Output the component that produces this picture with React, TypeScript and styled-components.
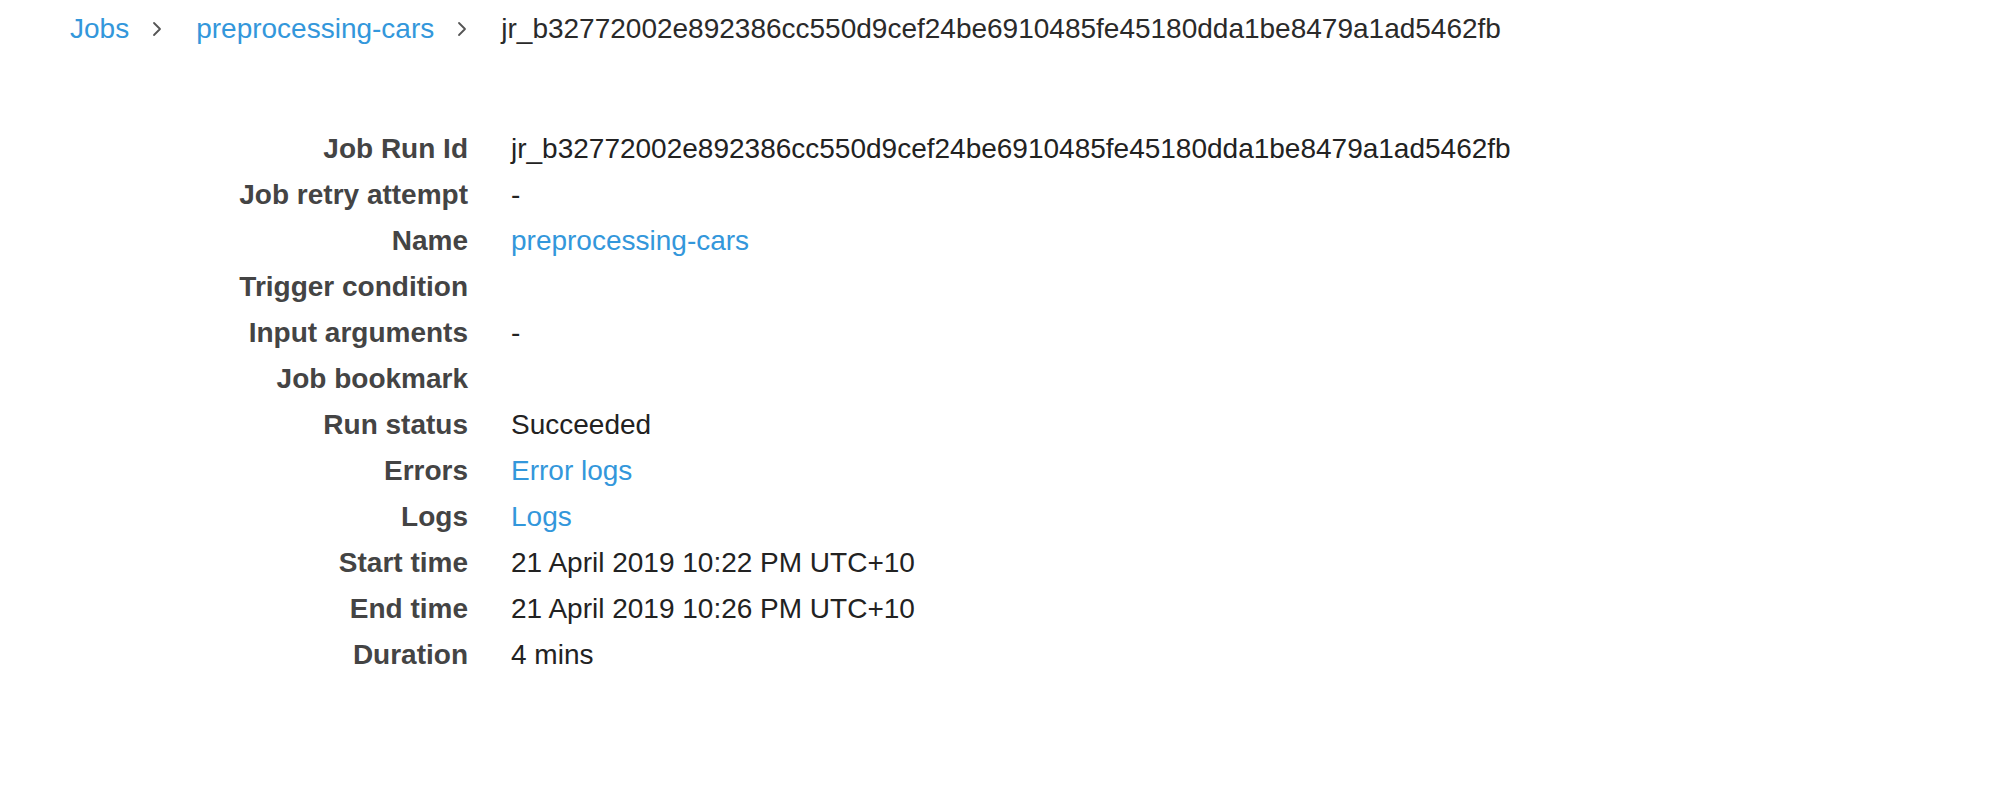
import React from "react";
import styled, { createGlobalStyle } from "styled-components";

const GlobalStyle = createGlobalStyle`
  html, body { margin: 0; padding: 0; background: #ffffff; }
  body { font-family: "Liberation Sans", Arial, Helvetica, sans-serif; }
`;

const Page = styled.div`
  padding-top: 6px;
  font-size: 28px;
  line-height: 46px;
  color: #222222;
`;

const Breadcrumb = styled.nav`
  display: flex;
  align-items: center;
  padding-left: 70px;
  height: 46px;
`;

const Crumb = styled.a<{ $current?: boolean }>`
  color: ${(p) => (p.$current ? "#2a2a2a" : "#3397db")};
  text-decoration: none;
  white-space: nowrap;
`;

const Sep = styled.span`
  display: inline-flex;
  align-items: center;
  margin: 0 34px 0 23px;
  color: #555555;
`;

const Details = styled.dl`
  display: grid;
  grid-template-columns: 468px 1fr;
  column-gap: 43px;
  margin: 74px 0 0 0;
`;

const Label = styled.dt`
  margin: 0;
  text-align: right;
  font-weight: 700;
  color: #444444;
  white-space: nowrap;
`;

const Value = styled.dd<{ $link?: boolean }>`
  margin: 0;
  min-height: 46px;
  color: ${(p) => (p.$link ? "#3397db" : "#222222")};
  white-space: nowrap;
`;

const Chevron = () => (
  <svg width="10" height="16" viewBox="0 0 10 16" fill="none">
    <path d="M2 2 L8 8 L2 14" stroke="currentColor" strokeWidth="1.8" strokeLinecap="round" strokeLinejoin="round" />
  </svg>
);

const runId = "jr_b32772002e892386cc550d9cef24be6910485fe45180dda1be8479a1ad5462fb";

const rows: { label: string; value: string; link?: boolean }[] = [
  { label: "Job Run Id", value: runId },
  { label: "Job retry attempt", value: "-" },
  { label: "Name", value: "preprocessing-cars", link: true },
  { label: "Trigger condition", value: "" },
  { label: "Input arguments", value: "-" },
  { label: "Job bookmark", value: "" },
  { label: "Run status", value: "Succeeded" },
  { label: "Errors", value: "Error logs", link: true },
  { label: "Logs", value: "Logs", link: true },
  { label: "Start time", value: "21 April 2019 10:22 PM UTC+10" },
  { label: "End time", value: "21 April 2019 10:26 PM UTC+10" },
  { label: "Duration", value: "4 mins" },
];

export default function App() {
  return (
    <>
      <GlobalStyle />
      <Page>
        <Breadcrumb>
          <Crumb href="#">Jobs</Crumb>
          <Sep><Chevron /></Sep>
          <Crumb href="#">preprocessing-cars</Crumb>
          <Sep><Chevron /></Sep>
          <Crumb as="span" $current>{runId}</Crumb>
        </Breadcrumb>
        <Details>
          {rows.map((r) => (
            <React.Fragment key={r.label}>
              <Label>{r.label}</Label>
              <Value $link={r.link}>{r.value}</Value>
            </React.Fragment>
          ))}
        </Details>
      </Page>
    </>
  );
}
